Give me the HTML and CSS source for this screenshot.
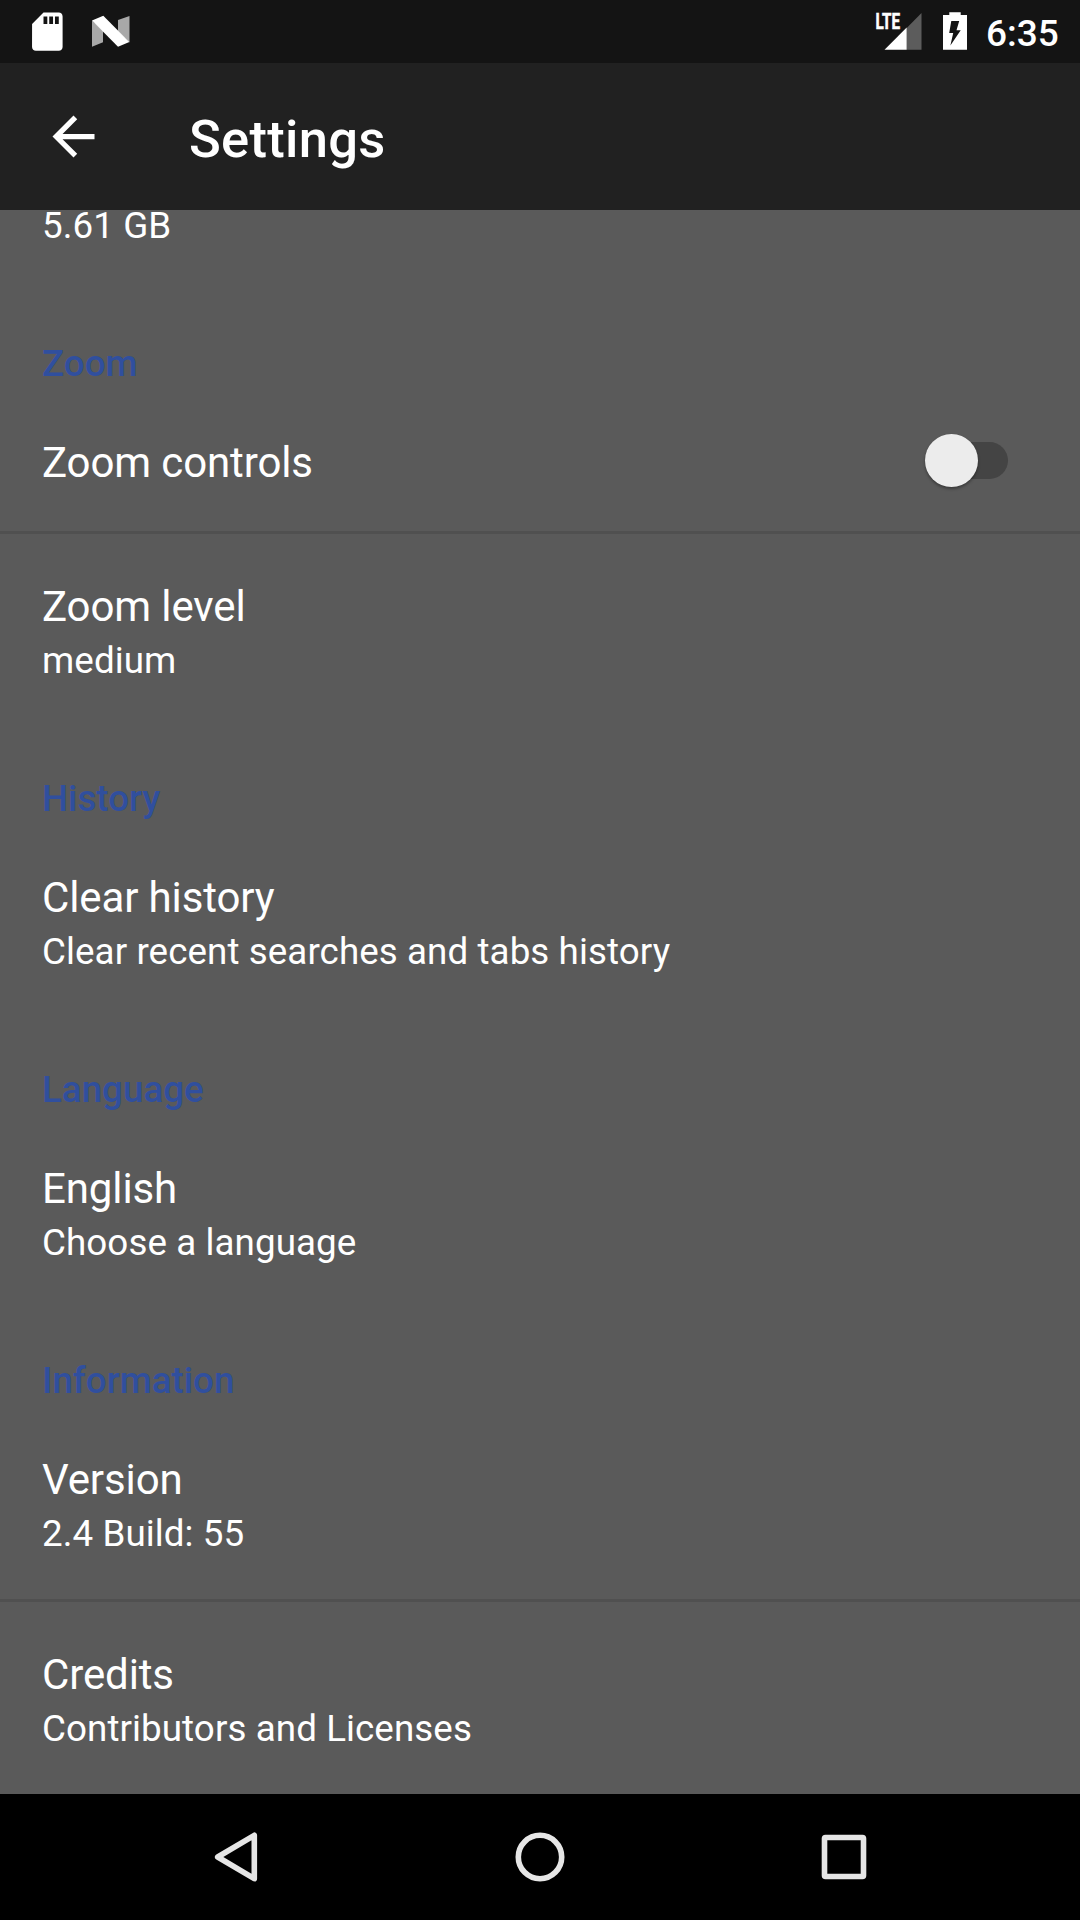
FILE: index.html
```html
<!DOCTYPE html>
<html lang="en">
<head>
<meta charset="utf-8">
<title>Settings</title>
<link rel="stylesheet" href="styles.css">
</head>
<body>
<div class="screen">
  <header class="status-bar">
    <svg class="status-icons" width="140" height="63" viewBox="0 0 140 63">
      <path transform="translate(24.4 8.8) scale(1.91)" fill="#fff" d="M18 2h-8L4.02 8 4 20c0 1.1.9 2 2 2h12c1.1 0 2-.9 2-2V4c0-1.1-.9-2-2-2zm-6 6h-2V4h2v4zm3 0h-2V4h2v4zm3 0h-2V4h2v4z"/>
      <path fill="#a8a8a8" d="M92 20.500l11 10v11.800l-11 4.400zM118 20l11.500-4v26.500l-11.500-11z"/>
      <path fill="#fff" d="M92 20.500l11.300-4.700 26 26.200-11.300 4.800z"/>
    </svg>
    <div class="status-right">
      <svg width="100" height="63" viewBox="870 0 100 63">
        <path fill="#5c5c5c" d="M906.700 28l14.800-15v36.700h-14.800z"/>
        <path fill="#fff" d="M884.500 49.700l22.200-22.200v22.200z"/>
        <text class="lte" x="875.500" y="29" textLength="24.500" lengthAdjust="spacingAndGlyphs">LTE</text>
        <path fill="#fff" fill-rule="evenodd" d="M949.300 12.300h11.400v2.700h6.300v34.700h-24V15h6.300zM951.300 21l-2.100 12h4l-2.800 12.500 10.300-15.300h-4.200l2.700-9.200z"/>
      </svg>
      <span class="clock">6:35</span>
    </div>
  </header>
  <div class="app-bar">
    <svg class="back" viewBox="0 0 24 24"><path fill="#fff" d="M20 11H7.830l5.590-5.590L12 4l-8 8 8 8 1.410-1.410L7.830 13H20v-2z"/></svg>
    <h1 class="app-title">Settings</h1>
  </div>
  <main class="content">
    <div class="item item-clipped"><div class="summary">5.61 GB</div></div>
    <h2 class="category">Zoom</h2>
    <div class="item item-switch">
      <div class="title">Zoom controls</div>
      <div class="switch"><span class="thumb"></span></div>
    </div>
    <div class="divider"></div>
    <div class="item"><div class="title">Zoom level</div><div class="summary">medium</div></div>
    <h2 class="category">History</h2>
    <div class="item"><div class="title">Clear history</div><div class="summary">Clear recent searches and tabs history</div></div>
    <h2 class="category">Language</h2>
    <div class="item"><div class="title">English</div><div class="summary">Choose a language</div></div>
    <h2 class="category">Information</h2>
    <div class="item"><div class="title">Version</div><div class="summary">2.4 Build: 55</div></div>
    <div class="divider"></div>
    <div class="item"><div class="title">Credits</div><div class="summary">Contributors and Licenses</div></div>
  </main>
  <nav class="nav-bar">
    <svg width="60" height="60" viewBox="0 0 60 60"><path d="M48.300 8.300v43.400L11.700 30z"/></svg>
    <svg width="60" height="60" viewBox="0 0 60 60"><circle cx="30" cy="30" r="21.700"/></svg>
    <svg width="60" height="60" viewBox="0 0 60 60"><rect x="10.500" y="10.500" width="39" height="39" rx="1"/></svg>
  </nav>
</div>
</body>
</html>
```
FILE: styles.css
```css
* { box-sizing: border-box; }
body {
  margin: 0;
  background: #5a5a5a;
  color: #fff;
  font-family: Roboto, sans-serif;
}
.screen {
  width: 1080px;
  height: 1920px;
  display: flex;
  flex-direction: column;
  overflow: hidden;
}
.status-bar {
  height: 63px;
  flex: none;
  display: flex;
  justify-content: space-between;
  background: #141414;
}
.status-icons { display: block; }
.status-right { display: flex; width: 210px; }
.lte {
  font: 700 22px Roboto, sans-serif;
  fill: #fff;
  stroke: #fff;
  stroke-width: .6;
}
.clock {
  margin-left: 16px;
  padding-top: 12px;
  font-size: 37px;
  font-weight: 500;
  line-height: 43px;
}
.app-bar {
  height: 147px;
  flex: none;
  display: flex;
  align-items: center;
  gap: 84px;
  padding-left: 42px;
  background: #212121;
}
.back { width: 63px; height: 63px; }
.app-title {
  margin: 5px 0 0;
  font-size: 52.5px;
  font-weight: 500;
  line-height: 62px;
  letter-spacing: .3px;
}
.content {
  height: 1584px;
  flex: none;
  overflow: hidden;
  background: #5a5a5a;
}
.category {
  height: 99px;
  margin: 0;
  padding: 51px 42px 0;
  color: #304f9e;
  font-size: 36.75px;
  font-weight: 500;
  line-height: 43px;
}
.item { height: 192px; padding: 48px 42px 0; }
.title { font-size: 42px; line-height: 49px; letter-spacing: -.12px; }
.summary {
  margin-top: 8px;
  font-size: 36.75px;
  line-height: 43px;
  letter-spacing: .08px;
}
.item-clipped { height: 81px; padding-top: 0; display: flex; }
.item-clipped .summary { margin-top: 0; line-height: 31px; }
.item-switch {
  height: 141px;
  display: flex;
  justify-content: space-between;
  padding-right: 72px;
}
.switch {
  width: 78px;
  height: 37px;
  margin-top: 4px;
  display: flex;
  align-items: center;
  border-radius: 19px;
  background: #444;
}
.thumb {
  width: 53px;
  height: 53px;
  flex: none;
  margin-left: -5px;
  border-radius: 50%;
  background: #ececec;
  box-shadow: 0 2px 3px rgba(0, 0, 0, .35);
}
.divider { height: 3px; background: #505050; }
.nav-bar {
  height: 126px;
  flex: none;
  display: flex;
  justify-content: space-between;
  align-items: center;
  padding: 0 206px;
  background: #000;
}
.nav-bar svg {
  fill: none;
  stroke: #e6e6e6;
  stroke-width: 5.6;
  stroke-linejoin: round;
}
```
